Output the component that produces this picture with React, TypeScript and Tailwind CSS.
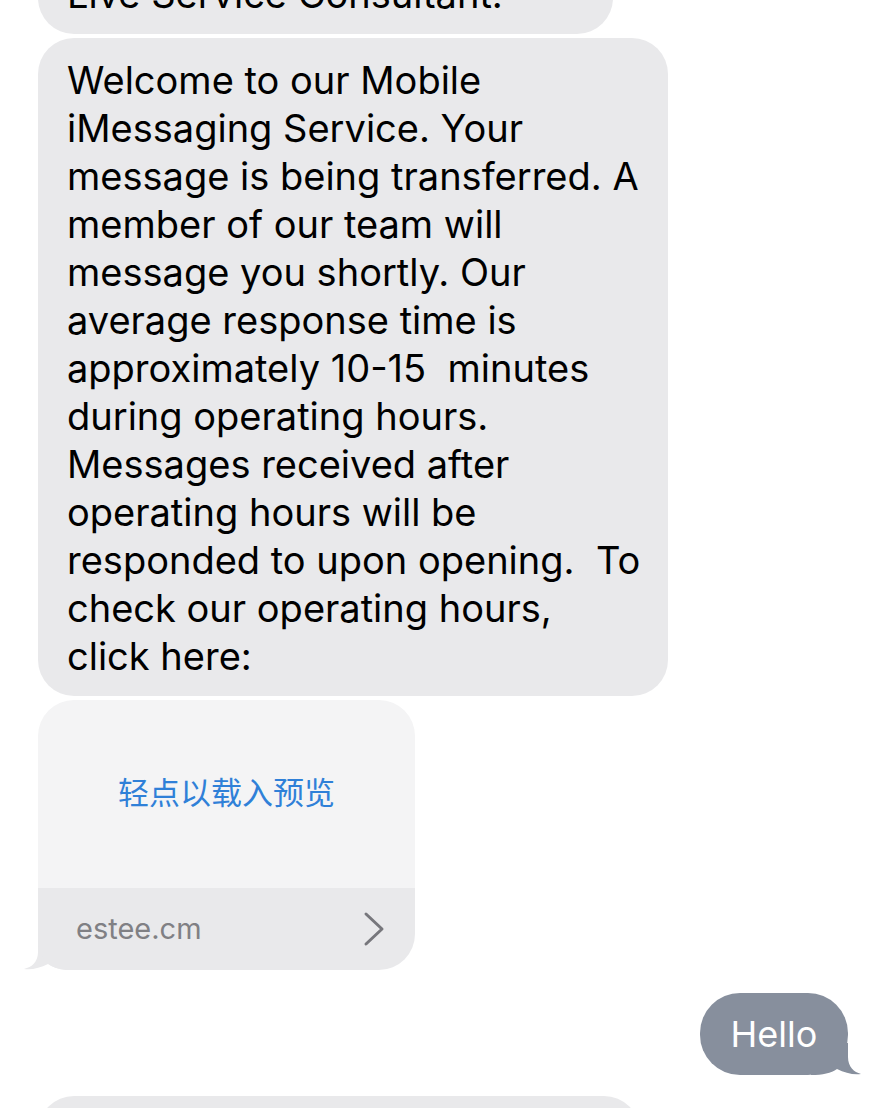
import React from 'react';

const font = { fontFamily: 'Inter, "Noto Sans CJK SC", sans-serif' };

const lines = [
  'Welcome to our Mobile',
  'iMessaging Service. Your',
  'message is being transferred. A',
  'member of our team will',
  'message you shortly. Our',
  'average response time is',
  'approximately 10-15\u00a0 minutes',
  'during operating hours.',
  'Messages received after',
  'operating hours will be',
  'responded to upon opening.\u00a0 To',
  'check our operating hours,',
  'click here:',
];

// bubble tail, covers the rounded corner too
const TailLeft = ({ color }: { color: string }) => (
  <svg className="absolute -left-[14px] bottom-0" width="50" height="32" viewBox="0 0 50 32">
    <path d="M14 0 L14 14 C14 24 8 29 0 31 C8 32 16 30 24 26 C30 30 38 32 50 32 L50 0 Z" fill={color} />
  </svg>
);

const TailRight = ({ color }: { color: string }) => (
  <svg className="absolute -right-[13px] bottom-0" width="50" height="32" viewBox="0 0 50 32">
    <path d="M37 0 L37 14 C37 24 43 29 50 31 C42 32 34 30 26 26 C20 30 12 32 0 32 L0 0 Z" fill={color} />
  </svg>
);

export default function App() {
  return (
    <div className="w-[886px] h-[1108px] bg-white overflow-hidden" style={font}>
      <div className="flex flex-col pl-[38px]">
        {/* cut-off bubble at top */}
        <div className="-mt-[48px] w-[575px] rounded-[36px] bg-[#e9e9eb] pl-[29px] pt-[18px] pb-[16px]">
          <p className="text-[38px] leading-[48px] text-black whitespace-nowrap">Live Service Consultant.</p>
        </div>

        {/* main message */}
        <div className="mt-[4px] w-[630px] rounded-[36px] bg-[#e9e9eb] pl-[29px] pt-[18px] pb-[16px]">
          {lines.map((l) => (
            <p key={l} className="text-[38px] leading-[48px] text-black whitespace-nowrap">
              {l}
            </p>
          ))}
        </div>

        {/* link preview */}
        <div className="relative mt-[4px] w-[377px]">
          <div className="relative z-10 rounded-t-[36px] rounded-br-[36px] rounded-bl-[28px] overflow-hidden">
            <div className="h-[188px] bg-[#f4f4f5] flex items-center justify-center pb-[2px]">
              <span className="text-[31px] text-[#2f80d8] -mt-[3px]" style={{ fontFamily: '"Noto Sans CJK SC", sans-serif' }}>
                轻点以载入预览
              </span>
            </div>
            <div className="h-[82px] bg-[#e9e9eb] flex items-center justify-between pl-[38px] pr-[30px]">
              <span className="text-[29px] text-[#808084]">estee.cm</span>
              <svg width="22" height="36" viewBox="0 0 22 36">
                <path d="M3 3 L19 18 L3 33" fill="none" stroke="#77777c" strokeWidth="3" strokeLinecap="round" strokeLinejoin="round" />
              </svg>
            </div>
          </div>
          <TailLeft color="#e9e9eb" />
        </div>

        {/* outgoing */}
        <div className="flex justify-end pr-[38px] mt-[23px]">
          <div className="relative h-[82px] w-[148px] rounded-[40px] bg-[#878f9d] flex items-center justify-center">
            <TailRight color="#878f9d" />
            <span className="relative z-10 text-[36px] text-white">Hello</span>
          </div>
        </div>

        {/* next bubble, cut at bottom */}
        <div className="mt-[21px] w-[602px] h-[80px] rounded-[36px] bg-[#e9e9eb]" />
      </div>
    </div>
  );
}
